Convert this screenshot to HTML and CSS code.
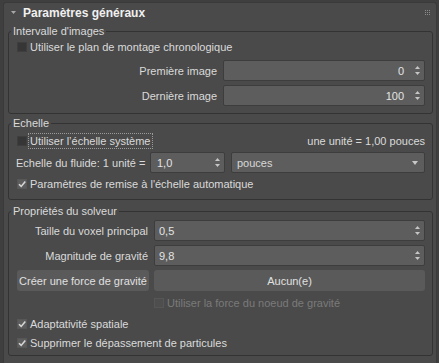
FILE: index.html
```html
<!DOCTYPE html>
<html lang="fr">
<head>
<meta charset="utf-8">
<title>Paramètres généraux</title>
<link rel="stylesheet" href="styles.css">
</head>
<body>
<div class="panel">
  <div class="header">
    <svg class="collapse" width="5" height="3" viewBox="0 0 5 3"><polygon points="0,0 5,0 2.5,3" fill="#a8a8a8"/></svg>
    <span class="title">Paramètres généraux</span>
    <svg class="grip" width="5" height="5" viewBox="0 0 5 5" fill="#8c8c8c">
      <rect x="0" y="0" width="1" height="1"/><rect x="2" y="0" width="1" height="1"/><rect x="4" y="0" width="1" height="1"/>
      <rect x="0" y="2" width="1" height="1"/><rect x="2" y="2" width="1" height="1"/><rect x="4" y="2" width="1" height="1"/>
      <rect x="0" y="4" width="1" height="1"/><rect x="2" y="4" width="1" height="1"/><rect x="4" y="4" width="1" height="1"/>
    </svg>
  </div>

  <fieldset class="group g1">
    <legend>Intervalle d'images</legend>
    <div class="gbody">
      <div class="check"><span class="box"></span><span>Utiliser le plan de montage chronologique</span></div>
      <div class="grid wide">
        <span class="lbl">Première image</span>
        <div class="field spin"><span class="val right">0</span><svg class="arrows" width="5" height="9" viewBox="0 0 5 9"><polygon points="2.5,0 5,3 0,3"/><polygon points="0,6 5,6 2.5,9"/></svg></div>
        <span class="lbl">Dernière image</span>
        <div class="field spin"><span class="val right">100</span><svg class="arrows" width="5" height="9" viewBox="0 0 5 9"><polygon points="2.5,0 5,3 0,3"/><polygon points="0,6 5,6 2.5,9"/></svg></div>
      </div>
    </div>
  </fieldset>

  <fieldset class="group g2">
    <legend>Echelle</legend>
    <div class="gbody">
      <div class="row between">
        <div class="check"><span class="box"></span><span class="focus">Utiliser l’échelle système</span></div>
        <span class="info">une unité = 1,00 pouces</span>
      </div>
      <div class="row fluid">
        <span class="flbl">Echelle du fluide: 1 unité =</span>
        <div class="field spin small"><span class="val">1,0</span><svg class="arrows" width="5" height="9" viewBox="0 0 5 9"><polygon points="2.5,0 5,3 0,3"/><polygon points="0,6 5,6 2.5,9"/></svg></div>
        <div class="field drop"><span class="val">pouces</span><svg class="dd" width="6" height="4" viewBox="0 0 6 4"><polygon points="0,0 6,0 3,4"/></svg></div>
      </div>
      <div class="check c3"><span class="box on"><svg width="10" height="10" viewBox="0 0 10 10"><path d="M2 5.2 L4.2 7.4 L8.3 2.6" fill="none" stroke="#d6d6d6" stroke-width="1.6"/></svg></span><span>Paramètres de remise à l'échelle automatique</span></div>
    </div>
  </fieldset>

  <fieldset class="group g3">
    <legend>Propriétés du solveur</legend>
    <div class="gbody">
      <div class="grid narrow">
        <span class="lbl">Taille du voxel principal</span>
        <div class="field spin"><span class="val">0,5</span><svg class="arrows" width="5" height="9" viewBox="0 0 5 9"><polygon points="2.5,0 5,3 0,3"/><polygon points="0,6 5,6 2.5,9"/></svg></div>
        <span class="lbl">Magnitude de gravité</span>
        <div class="field spin"><span class="val">9,8</span><svg class="arrows" width="5" height="9" viewBox="0 0 5 9"><polygon points="2.5,0 5,3 0,3"/><polygon points="0,6 5,6 2.5,9"/></svg></div>
        <button class="btn">Créer une force de gravité</button>
        <button class="btn">Aucun(e)</button>
        <span></span>
        <div class="check disabled"><span class="box"></span><span>Utiliser la force du noeud de gravité</span></div>
      </div>
      <div class="check c4"><span class="box on"><svg width="10" height="10" viewBox="0 0 10 10"><path d="M2 5.2 L4.2 7.4 L8.3 2.6" fill="none" stroke="#d6d6d6" stroke-width="1.6"/></svg></span><span>Adaptativité spatiale</span></div>
      <div class="check c5"><span class="box on"><svg width="10" height="10" viewBox="0 0 10 10"><path d="M2 5.2 L4.2 7.4 L8.3 2.6" fill="none" stroke="#d6d6d6" stroke-width="1.6"/></svg></span><span>Supprimer le dépassement de particules</span></div>
    </div>
  </fieldset>
</div>
</body>
</html>
```

FILE: styles.css
```css
html, body {
  margin: 0;
  padding: 0;
}
body {
  background: #3f3f3f;
  font-family: "Liberation Sans", Arial, sans-serif;
  font-size: 11px;
  color: #dadada;
  width: 439px;
  height: 363px;
  overflow: hidden;
}
.panel {
  margin: 2px 2px 0 3px;
  height: 361px;
  box-sizing: border-box;
  background: #4a4a4a;
  border: 1px solid #3a3a3a;
  border-bottom: none;
  border-radius: 3px 3px 0 0;
}
.header {
  height: 20px;
  display: flex;
  align-items: center;
  padding-left: 7px;
  padding-right: 6px;
}
.collapse {
  margin-top: -2px;
}
.title {
  margin-left: 7px;
  font-weight: bold;
  font-size: 12px;
  color: #f0f0f0;
  flex: 1;
}
.grip {
  margin-top: -2px;
}
.group {
  margin: 1px 3px 0 4px;
  padding: 0;
  border: 1px solid #333333;
  border-radius: 3px;
  min-width: 0;
}
.g2 { margin-top: 2px; }
.g3 { margin-top: 4px; }
legend {
  margin-left: 2px;
  padding: 0 2px;
  line-height: 14px;
  font-size: 11px;
  color: #dadada;
}
.gbody {
  padding: 0 7px 7px 8px;
}
.g3 .gbody { padding-bottom: 4px; }
.check {
  display: flex;
  align-items: center;
  height: 18px;
}
.box {
  width: 10px;
  height: 10px;
  box-sizing: border-box;
  background: #363636;
  border: 1px solid #3e3e3e;
  margin-right: 3px;
  flex: none;
  display: flex;
}
.box.on {
  background: #5c5c5c;
  border-color: #575757;
}
.box.on svg { margin: -1px; }
.check.disabled { color: #7a7a7a; height: 16px; }
.check.disabled .box { background: #4e4e4e; border-color: #565656; }
.grid {
  display: grid;
  column-gap: 5px;
  row-gap: 4px;
  align-items: center;
}
.grid.wide {
  grid-template-columns: 201px 1fr;
  margin-top: 4px;
}
.grid.narrow {
  grid-template-columns: 132px 1fr;
  margin-top: 2px;
}
.lbl {
  text-align: right;
  padding-right: 1px;
}
.field {
  height: 21px;
  box-sizing: border-box;
  background: #5d5d5d;
  border: 1px solid #3d3d3d;
  border-radius: 2px;
  display: flex;
  align-items: center;
  color: #e4e4e4;
}
.val {
  flex: 1;
  padding-left: 4px;
}
.val.right {
  text-align: right;
  padding-right: 11px;
}
.arrows {
  fill: #c6c6c6;
  margin-right: 4px;
  flex: none;
}
.row {
  display: flex;
  align-items: center;
}
.row.between {
  justify-content: space-between;
  margin-top: 3px;
  height: 16px;
}
.row.between .check { height: 16px; }
.focus {
  outline: 1px dotted #9a9a9a;
  outline-offset: 1px;
  padding-right: 1px;
}
.info { color: #dadada; }
.row.fluid {
  margin-top: 3px;
  gap: 0;
}
.flbl {
  width: 134px;
  margin-left: -1px;
}
.field.small {
  width: 75px;
  margin-right: 6px;
}
.field.small .val { padding-left: 6px; }
.field.drop {
  flex: 1;
}
.field.drop .val { padding-left: 5px; color: #d8d8d8; }
.dd {
  fill: #c8c8c8;
  margin-right: 6px;
}
.c3 { margin-top: 3px; height: 16px; }
.c4 { margin-top: 5px; height: 16px; }
.c5 { margin-top: 3px; height: 16px; }
.btn {
  height: 21px;
  margin: 0;
  padding: 0;
  border: none;
  border-radius: 3px;
  background: #5a5a5a;
  color: #e0e0e0;
  font-family: "Liberation Sans", Arial, sans-serif;
  font-size: 11px;
}
```
